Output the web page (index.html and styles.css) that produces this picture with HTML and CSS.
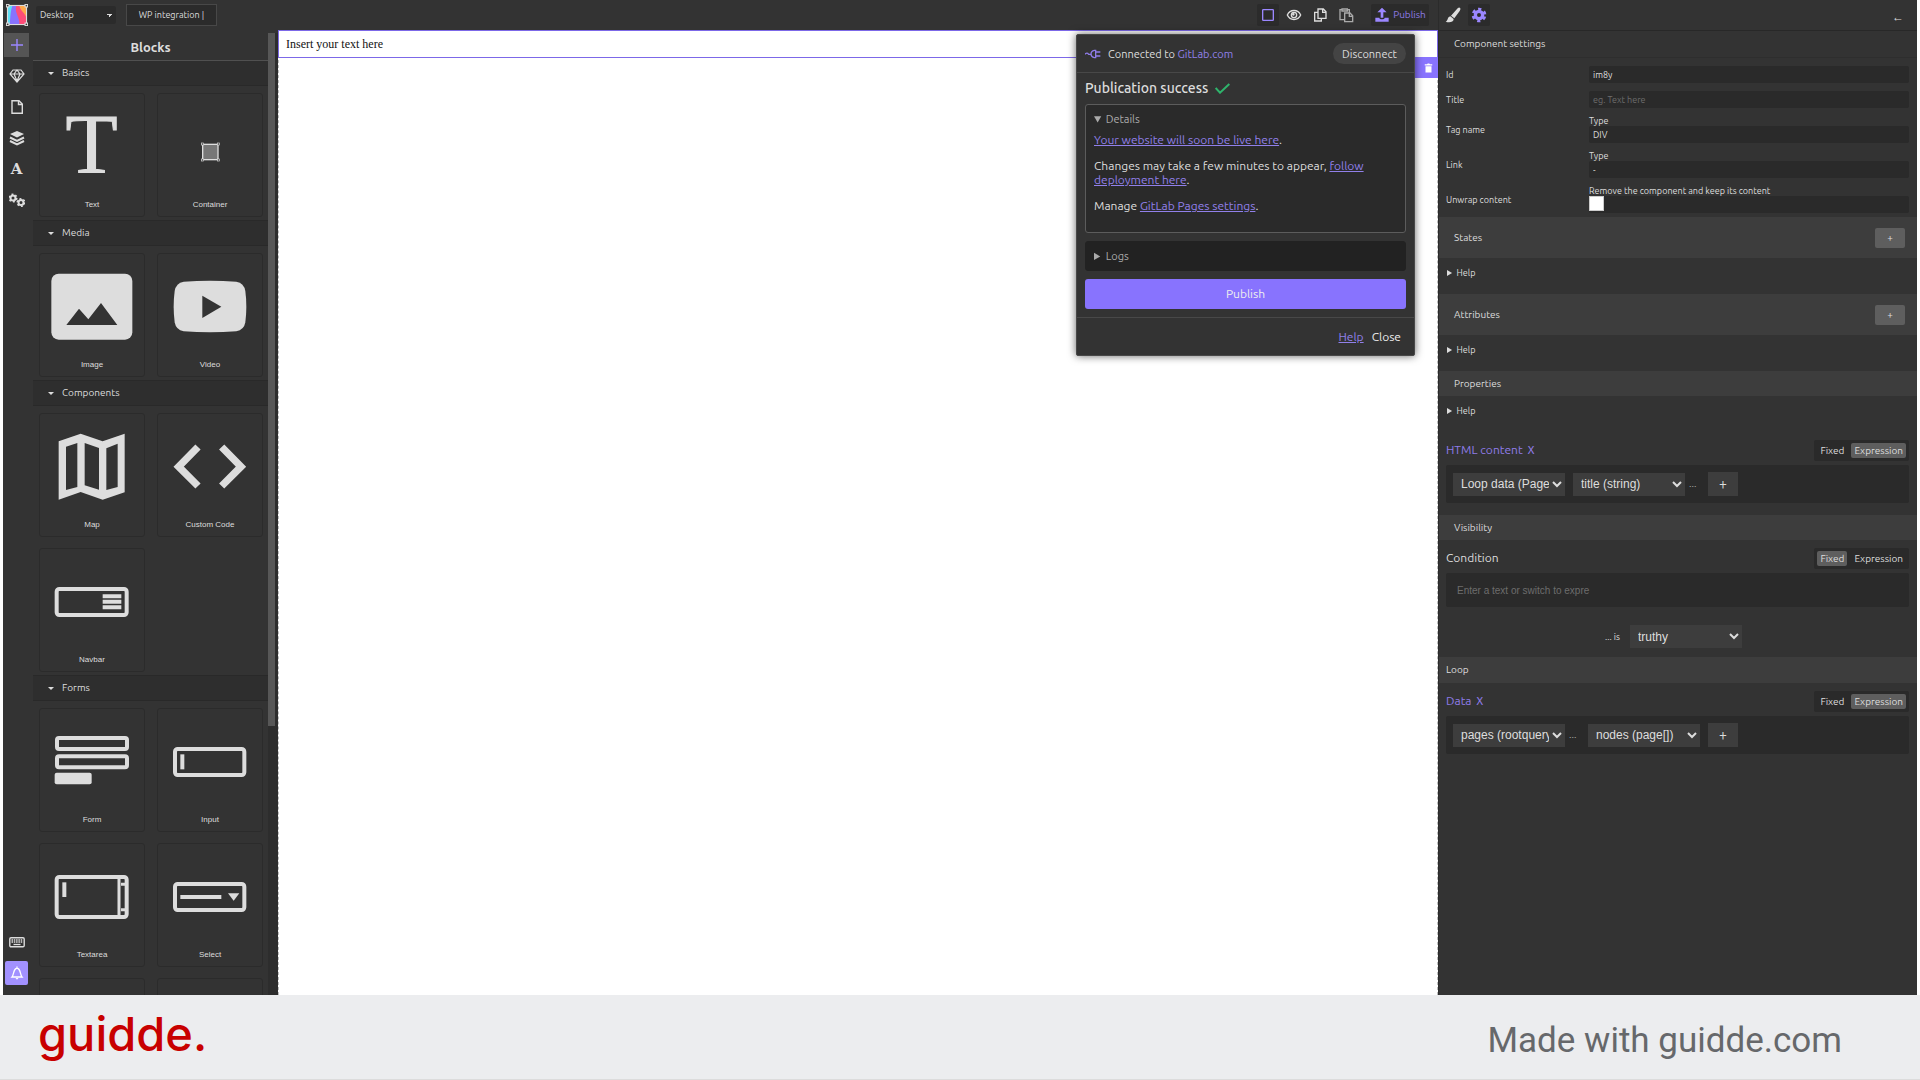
FILE: index.html
```
<!DOCTYPE html>
<html lang="en">
<head>
<meta charset="utf-8">
<title>WP integration</title>
<link rel="stylesheet" href="styles.css">
</head>
<body>
<div class="app">
  <header class="topbar">
    <svg class="logo" viewBox="0 0 60 60" aria-label="Home">
      <rect x="4" y="4" width="52" height="52" fill="#8873fe"/>
      <path d="M4 4h14c-6 12-6 34-8 52H4z" fill="#5fe0f5"/>
      <path d="M28 4h28v52H36c4-18-14-30-8-52z" fill="#ff4d78"/>
      <path d="M36 4h20v34C52 24 40 20 36 4z" fill="#ffa94d"/>
      <rect x="4" y="4" width="52" height="52" fill="none" stroke="#ddd" stroke-width="3"/>
      <g fill="#333" stroke="#ddd" stroke-width="3"><rect x="1" y="1" width="7" height="7"/><rect x="52" y="1" width="7" height="7"/><rect x="1" y="52" width="7" height="7"/><rect x="52" y="52" width="7" height="7"/></g>
    </svg>
    <select class="device" aria-label="Device"><option>Desktop</option></select>
    <button class="site-name">WP integration |</button>
    <div class="tools">
      <button class="tool boxed" aria-label="Outline"><svg viewBox="0 0 24 24"><rect x="4" y="4" width="16" height="16" rx="1" fill="none" stroke="#9b87ff" stroke-width="2"/></svg></button>
      <button class="tool" aria-label="Preview"><svg viewBox="0 0 24 24" fill="none" stroke="#ddd" stroke-width="2"><path d="M2 12c4-9 16-9 20 0-4 9-16 9-20 0z"/><circle cx="12" cy="12" r="4"/><circle cx="11" cy="11" r="1"/></svg></button>
      <button class="tool" aria-label="Copy"><svg viewBox="0 0 24 24" fill="none" stroke="#ddd" stroke-width="2"><path d="M9 3h8l4 4v10H9zM16 3v5h5M9 8H4v13h10v-4"/></svg></button>
      <button class="tool" aria-label="Paste"><svg viewBox="0 0 24 24" fill="none" stroke="#aaa" stroke-width="2"><path d="M9 19H3V4h3M14 4h3v4M6 3h8v3H6zM10 9h8l4 4v9H10zM17 9v5h5"/></svg></button>
      <button class="tool boxed publish-tool"><svg viewBox="0 0 24 24" fill="#9b87ff"><path d="M12 1l7 7h-5v8h-4V8H5zM2 16h6c0 3 8 3 8 0h6v6H2z"/></svg>Publish</button>
    </div>
  </header>

  <aside class="left">
    <nav class="rail">
      <button class="rail-btn active" aria-label="Blocks"><svg viewBox="0 0 16 16"><path d="M8 2v12M2 8h12" stroke="#9b87ff" stroke-width="1.400"/></svg></button>
      <button class="rail-btn" aria-label="Symbols"><svg viewBox="0 0 16 16" fill="none" stroke="#ddd" stroke-width="1.200"><path d="M4 2h8l3 4-7 8-7-8zM1 6h14M5 6l3 7 3-7-3-4z"/></svg></button>
      <button class="rail-btn" aria-label="Pages"><svg viewBox="0 0 16 16" fill="none" stroke="#ddd" stroke-width="1.400"><path d="M3 1.700h7L13.300 5v9.300H3zM9.500 2v3.500H13"/></svg></button>
      <button class="rail-btn" aria-label="Layers"><svg viewBox="0 0 16 16"><path d="M8 1l7 3-7 3.500L1 4z" fill="#ddd"/><path d="M1 7.500L8 11l7-3.500M1 11l7 3.500 7-3.500" fill="none" stroke="#ddd" stroke-width="2"/></svg></button>
      <button class="rail-btn rail-letter" aria-label="Fonts">A</button>
      <button class="rail-btn" aria-label="Settings"><svg viewBox="0 0 16 16" fill="none" stroke="#ddd"><circle cx="4" cy="6" r="2.500" stroke-width="2"/><circle cx="4" cy="6" r="3.800" stroke-width="1.500" stroke-dasharray="1.900 2.080"/><circle cx="12" cy="10.500" r="2.500" stroke-width="2"/><circle cx="12" cy="10.500" r="3.800" stroke-width="1.500" stroke-dasharray="1.900 2.080"/></svg></button>
      <span class="spacer"></span>
      <button class="rail-btn" aria-label="Shortcuts"><svg viewBox="0 0 16 16"><rect x=".8" y="3.800" width="14.400" height="9" rx="1.200" fill="none" stroke="#ddd" stroke-width="1.400"/><path d="M2.500 6h11M2.500 8h11" stroke="#ddd" stroke-width="1.300" stroke-dasharray="1.500 .8"/><path d="M4.500 10.500h7" stroke="#ddd" stroke-width="1.300"/></svg></button>
      <button class="rail-btn notify" aria-label="Notifications"><svg viewBox="0 0 16 16"><path d="M3 12c2-2 1-8 5-9 4 1 3 7 5 9zM8 1.500V3" fill="none" stroke="#fff" stroke-width="1.300"/><path d="M6.500 13h3L8 14.800z" fill="#fff"/></svg></button>
    </nav>
    <div class="blocks">
      <h2 class="blocks-title">Blocks</h2>
      <section>
        <h3 class="cat">Basics</h3>
        <div class="cards">
          <button class="card"><svg viewBox="0 0 318 300"><text class="glyph" x="158" y="237" text-anchor="middle">T</text></svg>Text</button>
          <button class="card"><svg viewBox="0 0 318 300"><rect x="137" y="151" width="46" height="46" fill="#777" stroke="#ddd" stroke-width="4"/><g fill="#333" stroke="#ddd" stroke-width="2"><rect x="133" y="147" width="6" height="6"/><rect x="181" y="147" width="6" height="6"/><rect x="133" y="195" width="6" height="6"/><rect x="181" y="195" width="6" height="6"/></g></svg>Container</button>
        </div>
      </section>
      <section>
        <h3 class="cat">Media</h3>
        <div class="cards">
          <button class="card"><svg viewBox="0 0 318 300"><rect x="37" y="59" width="243" height="198" rx="22" fill="#ddd"/><path d="M82 213l38-49 28 32 38-49 49 66z" fill="#333"/></svg>Image</button>
          <button class="card"><svg viewBox="0 0 318 300"><path d="M80 83q79-6 158 0 23 4 27 28 6 47 0 94-4 23-27 27-79 6-158 0-23-4-27-27-6-47 0-94 4-24 27-28z" fill="#ddd"/><path d="M136 125v67l57-34z" fill="#333"/></svg>Video</button>
        </div>
      </section>
      <section>
        <h3 class="cat">Components</h3>
        <div class="cards">
          <button class="card"><svg viewBox="0 0 318 300"><path fill="#ddd" fill-rule="evenodd" d="M59 82L125 59 191 82 257 59V235L191 257 125 234 59 257zM81 98V228L115 219V87zM137 87V214L180 227V102zM202 103V228L236 219V89z"/></svg>Map</button>
          <button class="card"><svg viewBox="0 0 318 300"><path d="M123 99l-58 59 58 58M194 99l58 59-58 58" fill="none" stroke="#ddd" stroke-width="22"/></svg>Custom Code</button>
          <button class="card"><svg viewBox="0 0 318 300"><rect x="53" y="120" width="210" height="78" rx="8" fill="none" stroke="#ddd" stroke-width="12"/><path d="M191 142h56M191 158h56M191 175h56" stroke="#ddd" stroke-width="12"/></svg>Navbar</button>
        </div>
      </section>
      <section>
        <h3 class="cat">Forms</h3>
        <div class="cards">
          <button class="card"><svg viewBox="0 0 318 300"><g fill="none" stroke="#ddd" stroke-width="12"><rect x="54" y="87" width="210" height="33" rx="6"/><rect x="54" y="142" width="210" height="33" rx="6"/></g><rect x="47" y="191" width="111" height="35" rx="6" fill="#ddd"/></svg>Form</button>
          <button class="card"><svg viewBox="0 0 318 300"><rect x="54" y="120" width="208" height="78" rx="8" fill="none" stroke="#ddd" stroke-width="12"/><path d="M76 136v45" stroke="#ddd" stroke-width="12"/></svg>Input</button>
          <button class="card"><svg viewBox="0 0 318 300"><rect x="53" y="99" width="210" height="120" rx="8" fill="none" stroke="#ddd" stroke-width="12"/><path d="M76 115v44" stroke="#ddd" stroke-width="12"/><path d="M240 100v118M246 121h14M246 197h14" stroke="#ddd" stroke-width="9"/></svg>Textarea</button>
          <button class="card"><svg viewBox="0 0 318 300"><rect x="54" y="120" width="208" height="78" rx="8" fill="none" stroke="#ddd" stroke-width="12"/><path d="M70 159h123" stroke="#ddd" stroke-width="12"/><path d="M213 148h34l-17 22z" fill="#ddd"/></svg>Select</button>
          <button class="card" aria-label="Button"></button>
          <button class="card" aria-label="Label"></button>
        </div>
      </section>
    </div>
    <div class="scroll"><div class="thumb"></div></div>
  </aside>

  <main class="canvas">
    <p class="selected">Insert your text here</p>
    <button class="trash" aria-label="Delete"><svg viewBox="0 0 12 12" fill="#fff"><path d="M1 1h3l1-1h2l1 1h3v1.500H1zM2 3.500h8V12H2z"/></svg></button>

    <div class="dialog" role="dialog" aria-label="Publication">
      <header class="dialog-head">
        <svg class="plug" viewBox="0 0 48 30" fill="none" stroke="#8f7ce8" stroke-width="4"><path d="M0 16q6-7 11 0h9M32 4h-4q-10 2-10 11t10 11h4zM32 9h14M32 21h14"/></svg>
        <span class="grow">Connected to <a class="plain" href="#gitlab">GitLab.com</a></span>
        <button class="pill">Disconnect</button>
      </header>
      <div class="dialog-body">
        <h2 class="success">Publication success <svg viewBox="0 0 45 33"><path d="M2 15l13 14L43 3" fill="none" stroke="#2fb46c" stroke-width="6"/></svg></h2>
        <details class="box" open>
          <summary>Details</summary>
          <p><a href="#site">Your website will soon be live here</a>.</p>
          <p>Changes may take a few minutes to appear, <a href="#deploy">follow deployment here</a>.</p>
          <p>Manage <a href="#pages">GitLab Pages settings</a>.</p>
        </details>
        <details class="box logs"><summary>Logs</summary></details>
        <button class="primary">Publish</button>
      </div>
      <footer class="dialog-foot"><a href="#help">Help</a><button class="close">Close</button></footer>
    </div>
  </main>

  <aside class="right">
    <header class="right-tabs">
      <button class="tool" aria-label="Style"><svg viewBox="0 0 24 24" fill="#ddd"><path d="M22 1c2 1 1 3 0 5l-8 11-5-4L19 2q2-2 3-1zM8 14l5 4c0 5-7 6-12 4 4-1 2-7 7-8z"/></svg></button>
      <button class="tool boxed" aria-label="Settings"><svg viewBox="0 0 24 24"><circle cx="12" cy="12" r="5.500" fill="none" stroke="#9b87ff" stroke-width="5"/><circle cx="12" cy="12" r="9" fill="none" stroke="#9b87ff" stroke-width="4" stroke-dasharray="4.800 4.625" stroke-dashoffset="-2.300"/></svg></button>
      <button class="back" aria-label="Back">←</button>
    </header>
    <h3 class="settings-title">Component settings</h3>
    <form class="fields">
      <label for="f-id">Id</label><div><input id="f-id" class="field" value="im8y"></div>
      <label for="f-title">Title</label><div><input id="f-title" class="field" placeholder="eg. Text here"></div>
      <label for="f-tag">Tag name</label><div><span class="type">Type</span><select id="f-tag" class="field"><option>DIV</option></select></div>
      <label for="f-link">Link</label><div><span class="type">Type</span><select id="f-link" class="field"><option>-</option></select></div>
      <label for="f-unwrap">Unwrap content</label><div><span class="type">Remove the component and keep its content</span><span class="field check"><input type="checkbox" id="f-unwrap"></span></div>
    </form>
    <h3 class="bar tall">States<button class="add" aria-label="Add state">+</button></h3>
    <details class="help"><summary>Help</summary></details>
    <h3 class="bar tall">Attributes<button class="add" aria-label="Add attribute">+</button></h3>
    <details class="help"><summary>Help</summary></details>
    <h3 class="bar">Properties</h3>
    <details class="help"><summary>Help</summary></details>
    <section class="prop">
      <div class="prop-head"><h4 class="on">HTML content <button class="x" aria-label="Clear">x</button></h4><div class="toggle"><button>Fixed</button><button class="cur">Expression</button></div></div>
      <div class="expr"><select aria-label="Source"><option>Loop data (Page)</option></select><select aria-label="Field"><option>title (string)</option></select><span class="dots">...</span><button class="plus" aria-label="Add">+</button></div>
    </section>
    <h3 class="bar">Visibility</h3>
    <section class="prop visibility">
      <div class="prop-head"><h4>Condition</h4><div class="toggle"><button class="cur">Fixed</button><button>Expression</button></div></div>
      <input class="cond" aria-label="Condition" placeholder="Enter a text or switch to expre">
      <div class="is"><label for="f-is">... is</label><select id="f-is"><option>truthy</option></select></div>
    </section>
    <h3 class="bar loop">Loop</h3>
    <section class="prop">
      <div class="prop-head"><h4 class="on">Data <button class="x" aria-label="Clear">x</button></h4><div class="toggle"><button>Fixed</button><button class="cur">Expression</button></div></div>
      <div class="expr"><select aria-label="Query"><option>pages (rootquery)</option></select><span class="dots">...</span><select aria-label="Nodes"><option>nodes (page[])</option></select><button class="plus" aria-label="Add">+</button></div>
    </section>
  </aside>
</div>
<footer class="brandbar"><span class="brand">guidde.</span><span class="made">Made with guidde.com</span></footer>
</body>
</html>
```
FILE: styles.css
```
* { box-sizing: border-box; }
body {
  margin: 0;
  height: 100vh;
  display: flex;
  flex-direction: column;
  background: #fff;
  color: #ddd;
  font: 10px/14px Ubuntu, "Noto Sans", sans-serif;
}
h2, h3, h4, p { margin: 0; font-weight: 400; }
h3 { font-size: 10px; }
button, input, select { font: inherit; color: inherit; border: 0; margin: 0; padding: 0; background: none; }
button { cursor: pointer; }
svg { display: block; }
a { color: #9180ea; }

.app {
  flex: 1;
  min-height: 0;
  margin: 0 3px;
  display: grid;
  grid-template-columns: 275px 1fr 479px;
  grid-template-rows: 30px minmax(0, 1fr);
  background: #333;
}

/* top bar */
.topbar { grid-column: 1 / 3; display: flex; align-items: center; padding: 0 9px 0 3px; }
.logo { width: 22px; height: 22px; }
.device {
  appearance: none;
  width: 80px;
  height: 18px;
  margin: 0 10px 0 8px;
  padding-left: 4px;
  border-radius: 2px;
  font-size: 9px;
  background-color: #2b2b2b;
  background-image: linear-gradient(45deg, transparent 50%, #ddd 50%), linear-gradient(135deg, #ddd 50%, transparent 50%);
  background-image: linear-gradient(225deg, #ddd 50%, transparent 50%), linear-gradient(135deg, #ddd 50%, transparent 50%);
  background-size: 3px 3px;
  background-repeat: no-repeat;
  background-position: 71px 8px, 74px 8px;
}
.site-name { width: 91px; height: 22px; border: 1px solid #484848; background: #2b2b2b; font-size: 9px; }
.tools { margin-left: auto; display: flex; gap: 4px; }
.tool { width: 22px; height: 22px; display: flex; align-items: center; justify-content: center; border-radius: 2px; }
.tool svg { width: 16px; height: 16px; }
.tool.boxed { background: #2b2b2b; }
.publish-tool { width: 58px; gap: 3px; margin-left: 10px; color: #8f7ce8; font-size: 10px; }

/* left side */
.left { display: flex; min-height: 0; overflow: hidden; }
.rail { width: 30px; display: flex; flex-direction: column; gap: 7px; padding: 3px 4px 10px 1px; }
.rail-btn { width: 25px; height: 24px; display: flex; align-items: center; justify-content: center; }
.rail-btn svg { width: 16px; height: 16px; }
.rail-btn.active { background: #555; }
.rail-btn.notify { background: #a291ff; border-radius: 2px; width: 23px; margin-left: 1px; }
.rail-letter { font: 700 15px/24px "DejaVu Serif", serif; }
.spacer { flex: 1; }
.blocks { flex: 1; overflow: hidden; }
.blocks-title { height: 31px; padding-top: 8px; text-align: center; font-size: 13px; font-weight: 600; line-height: 18px; border-bottom: 1px solid #505050; }
.cat { height: 26px; display: flex; align-items: center; gap: 8px; padding-left: 15px; background: #2e2e2e; border-top: 1px solid #292929; border-bottom: 1px solid #292929; }
.blocks-title + section .cat { border-top: 0; height: 25px; }
.cat::before { content: ""; border: 3px solid transparent; border-top-color: #ddd; border-bottom: 0; }
.cards { display: grid; grid-template-columns: 106px 106px; gap: 11px 12px; padding: 7px 5px 3px 6px; }
.card {
  height: 124px;
  display: flex;
  flex-direction: column;
  align-items: center;
  border: 1px solid #2b2b2b;
  border-radius: 3px;
  font: 8px/22px "Liberation Sans", Arial, sans-serif;
}
.card svg { width: 106px; height: 100px; }
.glyph { font: 400 256px "Liberation Serif", serif; fill: #ddd; stroke: #ddd; stroke-width: 3px; }
.scroll { width: 10px; margin-top: 3px; padding-right: 3px; background: #2d2d2d; }
.thumb { height: 72%; background: #575757; }

/* canvas */
.canvas { position: relative; background: #fff; border-left: 1px dashed #bbb; border-right: 1px dashed #bbb; }
.selected {
  height: 28px;
  margin: 0 -1px;
  padding: 0 7px;
  border: 1px solid #7c68e8;
  color: #111;
  font: 12px/26px "Liberation Serif", "Times New Roman", serif;
}
.trash { position: absolute; top: 27px; right: -1px; width: 32px; height: 21px; padding-left: 18px; background: #8873fe; }
.trash svg { width: 9px; height: 10px; }

/* publication dialog */
.dialog {
  position: absolute;
  top: 4px;
  right: 22px;
  width: 339px;
  background: #333;
  border: 1px solid #484848;
  border-radius: 2px;
  box-shadow: 0 0 8px #0009;
  font-size: 12px;
}
.dialog-head { height: 38px; display: flex; align-items: center; gap: 7px; padding: 0 8px; border-bottom: 1px solid #484848; font-size: 11px; }
.plug { width: 16px; height: 10px; }
.grow { flex: 1; }
a.plain { text-decoration: none; }
.pill { width: 73px; height: 21px; border-radius: 11px; background: #444; font-size: 11px; }
.dialog-body { padding: 7px 8px 8px; display: flex; flex-direction: column; gap: 8px; }
.success { display: flex; align-items: center; gap: 7px; height: 16px; font-size: 14px; font-weight: 500; }
.success svg { width: 15px; height: 11px; }
.box { border: 1px solid #5c5c5c; border-radius: 3px; background: #2a2a2a; padding: 7px 8px; min-height: 129px; }
.box summary { color: #aaa; font-size: 11px; }
.box p { margin-bottom: 12px; }
.box p:last-child { margin-bottom: 0; }
.box summary + p { margin-top: 7px; }
.box.logs { min-height: 30px; border-color: #222; background: #222; }
.primary { height: 30px; border-radius: 3px; background: #8873fe; color: #eee; }
.dialog-foot { height: 38px; display: flex; align-items: center; justify-content: flex-end; gap: 8px; padding: 0 13px; border-top: 1px solid #484848; }
.close { color: #eee; }

/* right side */
.right { grid-column: 3; grid-row: 1 / 3; overflow: hidden; border-left: 1px solid #2b2b2b; }
.right-tabs { height: 31px; display: flex; align-items: center; gap: 4px; padding: 0 13px 0 3px; border-bottom: 1px solid #282828; }
.back { margin-left: auto; font-size: 12px; padding-top: 3px; }
.settings-title { height: 27px; line-height: 26px; padding-left: 15px; border-bottom: 1px solid #2e2e2e; }
.fields { display: grid; grid-template-columns: 135px 1fr; gap: 8px; align-items: center; padding: 8px 8px 4px 7px; font-size: 9px; }
.fields > div { min-width: 0; }
.type { display: block; line-height: 10px; }
.field { appearance: none; display: block; width: 100%; height: 17px; padding: 0 4px; border-radius: 2px; background: #2a2a2a; }
.field::placeholder, .cond::placeholder { color: #6d6d6d; opacity: 1; }
.check { padding: 0; }
.check input { appearance: none; display: block; width: 15px; height: 15px; background: #fff; border: 1px solid #ccc; }
.bar { height: 25px; display: flex; align-items: center; justify-content: space-between; padding: 0 12px 0 15px; background: #3d3d3d; }
.bar.tall { height: 41px; }
.bar.loop { height: 26px; padding-left: 7px; }
.add { width: 30px; height: 20px; border-radius: 2px; background: #5e5e5e; }
.help { height: 36px; padding: 8px; font-size: 9px; }
.prop { padding: 8px 8px 12px 7px; }
.prop.visibility { padding-bottom: 9px; }
.prop-head { height: 25px; display: flex; align-items: flex-start; justify-content: space-between; }
.prop h4 { font-size: 12px; line-height: 20px; }
.prop h4.on { color: #8f7ce8; }
.x { font-size: 14px; line-height: 14px; padding-left: 2px; }
.toggle { display: flex; height: 21px; gap: 4px; padding: 3px; border-radius: 2px; background: #2a2a2a; line-height: 15px; }
.toggle button { height: 15px; padding: 0 3px; border-radius: 2px; }
.toggle .cur { background: #5e5e5e; }
.expr { height: 38px; display: flex; align-items: center; padding: 0 7px; background: #2a2a2a; border-radius: 2px; }
.prop select { width: 112px; height: 23px; padding: 0 0 0 4px; background: #3d3d3d; font: 12px "Liberation Sans", Arial, sans-serif; }
.expr select + select { margin-left: 8px; }
.dots { width: 23px; padding-left: 4px; color: #aaa; }
.plus { width: 30px; height: 24px; background: #3d3d3d; font-size: 14px; }
.expr select + .plus { margin-left: 8px; }
.cond { display: block; width: 100%; height: 34px; padding: 0 11px; border-radius: 2px; background: #2a2a2a; font: 10px "Liberation Sans", Arial, sans-serif; }
.is { display: flex; align-items: center; justify-content: center; gap: 10px; padding-top: 18px; margin-right: 8px; font-size: 9px; }

/* footer */
.brandbar { height: 85px; display: flex; align-items: center; justify-content: space-between; padding: 0 78px 0 38px; background: #ecedef; border-bottom: 1px solid #dcdcdc; }
.brand { color: #c80000; font: 500 47px/60px Inter, sans-serif; padding-bottom: 6px; }
.made { color: #66686b; font: 35px/60px Roboto, sans-serif; padding-top: 8px; }
```
